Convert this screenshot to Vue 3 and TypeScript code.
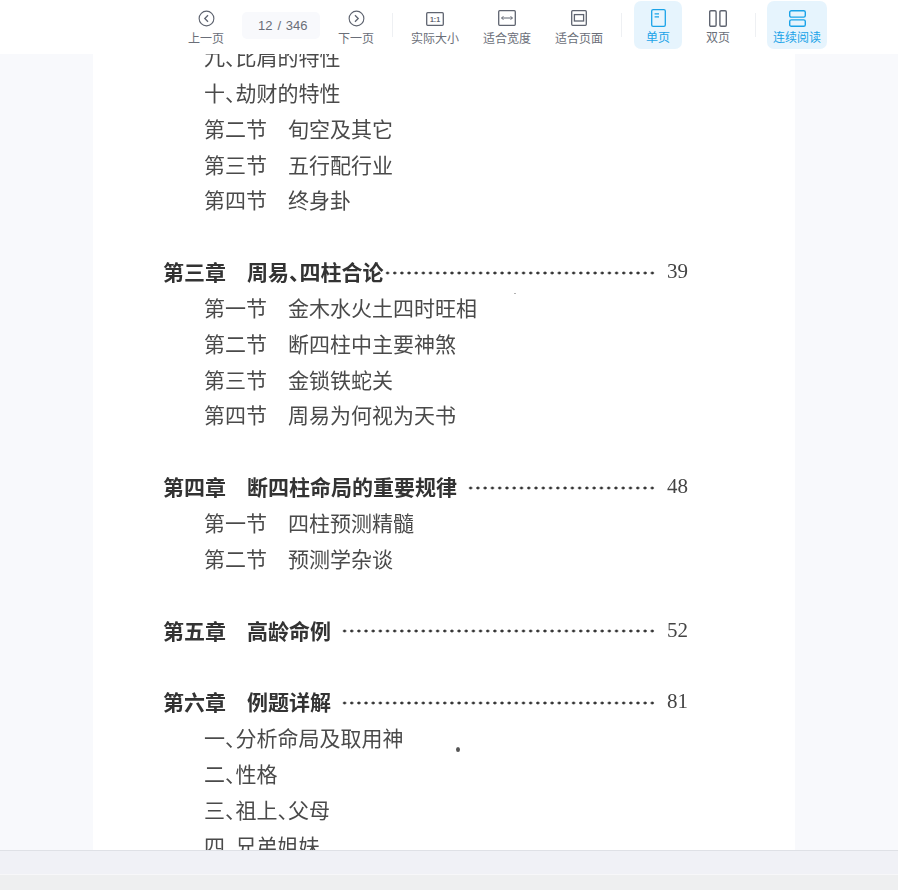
<script setup lang="ts">
interface Line { kind: 'blank' | 'chapter' | 'section' | 'item'; label?: string; title?: string; num?: string; tight?: boolean }
const lines: Line[] = [
  { kind: 'item', title: '九、比肩的特性' },
  { kind: 'item', title: '十、劫财的特性' },
  { kind: 'section', label: '第二节', title: '旬空及其它' },
  { kind: 'section', label: '第三节', title: '五行配行业' },
  { kind: 'section', label: '第四节', title: '终身卦' },
  { kind: 'blank' },
  { kind: 'chapter', label: '第三章', title: '周易、四柱合论', num: '39', tight: true },
  { kind: 'section', label: '第一节', title: '金木水火土四时旺相' },
  { kind: 'section', label: '第二节', title: '断四柱中主要神煞' },
  { kind: 'section', label: '第三节', title: '金锁铁蛇关' },
  { kind: 'section', label: '第四节', title: '周易为何视为天书' },
  { kind: 'blank' },
  { kind: 'chapter', label: '第四章', title: '断四柱命局的重要规律', num: '48' },
  { kind: 'section', label: '第一节', title: '四柱预测精髓' },
  { kind: 'section', label: '第二节', title: '预测学杂谈' },
  { kind: 'blank' },
  { kind: 'chapter', label: '第五章', title: '高龄命例', num: '52' },
  { kind: 'blank' },
  { kind: 'chapter', label: '第六章', title: '例题详解', num: '81' },
  { kind: 'item', title: '一、分析命局及取用神' },
  { kind: 'item', title: '二、性格' },
  { kind: 'item', title: '三、祖上、父母' },
  { kind: 'item', title: '四、兄弟姐妹' },
]
</script>

<template>
  <div class="viewer">
    <header class="toolbar">
      <button class="tool nav">
        <svg width="17" height="17" viewBox="0 0 18 18" fill="none" stroke="#5f6470" stroke-width="1.2"><circle cx="9" cy="9" r="7.8"/><path d="M10.6 5.6 7.2 9l3.4 3.4" stroke-width="1.4"/></svg>
        <span>上一页</span>
      </button>
      <div class="pager"><span>12</span><span class="of">/ 346</span></div>
      <button class="tool nav">
        <svg width="17" height="17" viewBox="0 0 18 18" fill="none" stroke="#5f6470" stroke-width="1.2"><circle cx="9" cy="9" r="7.8"/><path d="M7.4 5.6 10.8 9l-3.4 3.4" stroke-width="1.4"/></svg>
        <span>下一页</span>
      </button>
      <i class="sep"></i>
      <button class="tool fit">
        <svg width="18" height="14" viewBox="0 0 18 14" fill="none"><rect x=".7" y=".7" width="16.6" height="12.6" rx="1" stroke="#5f6470" stroke-width="1.3"/><text x="9" y="9.6" text-anchor="middle" font-size="7" font-weight="700" font-family="Liberation Sans" fill="#5f6470">1:1</text></svg>
        <span>实际大小</span>
      </button>
      <button class="tool fit">
        <svg width="18" height="16" viewBox="0 0 18 16" fill="none" stroke="#5f6470"><rect x=".7" y=".7" width="16.6" height="14.6" rx="1" stroke-width="1.3"/><path d="M3.6 8h10.8M5.4 6.2 3.6 8l1.8 1.8M12.6 6.2 14.4 8l-1.8 1.8" stroke-width="1"/></svg>
        <span>适合宽度</span>
      </button>
      <button class="tool fit">
        <svg width="16" height="16" viewBox="0 0 16 16" fill="none" stroke="#5f6470" stroke-width="1.3"><rect x=".7" y=".7" width="14.6" height="14.6" rx="1"/><rect x="3.4" y="4.6" width="9.2" height="6.4" /></svg>
        <span>适合页面</span>
      </button>
      <i class="sep second"></i>
      <button class="tool mode active">
        <svg width="15" height="18" viewBox="0 0 15 18" fill="none" stroke="#1aa3e8" stroke-width="1.3"><rect x=".7" y=".7" width="13.6" height="16.6" rx="1.4"/><path d="M3.6 4.8h4.4M3.6 7.8h4.4"/></svg>
        <span>单页</span>
      </button>
      <button class="tool mode">
        <svg width="18" height="17" viewBox="0 0 18 17" fill="none" stroke="#5f6470" stroke-width="1.4"><rect x=".7" y=".7" width="6.4" height="15.6" rx="1.2"/><rect x="10.9" y=".7" width="6.4" height="15.6" rx="1.2"/></svg>
        <span>双页</span>
      </button>
      <i class="sep third"></i>
      <button class="tool cont active">
        <svg width="17" height="17" viewBox="0 0 17 17" fill="none" stroke="#1aa3e8" stroke-width="1.4"><rect x=".7" y=".7" width="15.6" height="6.4" rx="1.6"/><rect x=".7" y="9.9" width="15.6" height="6.4" rx="1.6"/></svg>
        <span>连续阅读</span>
      </button>
    </header>

    <main class="stage">
      <article class="page">
        <div v-for="(l, i) in lines" :key="i" class="line" :class="l.kind">
          <template v-if="l.kind === 'chapter'">
            <span class="label">{{ l.label }}</span>
            <span class="title">{{ l.title }}</span>
            <span class="dots" :class="{ tight: l.tight }"></span>
            <span class="num">{{ l.num }}</span>
          </template>
          <template v-else-if="l.kind === 'section'">
            <span class="label">{{ l.label }}</span>
            <span class="title">{{ l.title }}</span>
          </template>
          <span v-else-if="l.kind === 'item'" class="title">{{ l.title }}</span>
        </div>
        <i class="speck big"></i>
        <i class="speck small"></i>
      </article>
    </main>

    <div class="statusbar"></div>
    <div class="footer"></div>
  </div>
</template>

<style>
html, body { margin: 0; padding: 0; }
</style>

<style scoped>
.viewer {
  width: 898px;
  height: 890px;
  display: flex;
  flex-direction: column;
  overflow: hidden;
  background: #f8f9fc;
  font-family: "Liberation Sans", "Noto Sans CJK SC", sans-serif;
}
.toolbar {
  height: 54px;
  flex: none;
  background: #fff;
  display: flex;
  align-items: flex-start;
  box-sizing: border-box;
  padding: 1px 0 0 181px;
  position: relative;
  z-index: 1;
}
.tool {
  border: 0;
  background: transparent;
  margin: 0;
  padding: 0 0 2px;
  height: 48px;
  display: flex;
  flex-direction: column;
  align-items: center;
  justify-content: flex-end;
  gap: 5px;
  font: inherit;
  font-size: 12px;
  line-height: 15px;
  color: #6a6e78;
  border-radius: 7px;
  box-sizing: border-box;
  white-space: nowrap;
}
.nav { width: 50px; }
.fit { width: 72px; gap: 6px; }
.mode { width: 48px; margin-right: 12px; padding-bottom: 3px; gap: 4px; }
.cont { width: 60px; padding-bottom: 3px; gap: 4px; }
.active { background: #e6f4fd; color: #1aa3e8; }
.pager {
  width: 78px;
  height: 27px;
  margin: 11px 0 0 11px;
  background: #f8f9fc;
  border-radius: 5px;
  font-size: 13px;
  color: #6a6e78;
  display: flex;
  align-items: center;
  padding-left: 16px;
  box-sizing: border-box;
  gap: 5px;
}
.of { word-spacing: 1px; }
.pager + .tool { margin-left: 11px; }
.sep {
  width: 1px;
  height: 24px;
  background: #eef0f3;
  margin: 12px 6px 0 11px;
}
.sep.second { margin: 12px 12px 0 6px; }
.sep.third { margin: 12px 11px 0 1px; }
.stage {
  flex: 1;
  min-height: 0;
  overflow: hidden;
  display: flex;
}
.page {
  position: relative;
  width: 702px;
  height: 900px;
  flex: none;
  margin-left: 93px;
  background: #fff;
  box-sizing: border-box;
  padding-left: 70px;
  padding-right: 107px;
  margin-top: -15px;
  color: #4a4a4a;
  font-family: "Noto Sans CJK SC", sans-serif;
  font-size: 21px;
  font-feature-settings: "halt";
}
.line {
  height: 35.85px;
  line-height: 35.85px;
  display: flex;
  align-items: center;
  white-space: nowrap;
  filter: blur(0.35px);
}
.section, .item { padding-left: 41px; }
.section .label, .chapter .label { width: 84px; flex: none; }
.chapter { color: #333; font-weight: 700; }
.chapter .title { flex: none; }
.dots {
  flex: 1;
  height: 4px;
  margin: 2px 11px 0 10px;
  background: radial-gradient(circle at 50% 50%, #333 1.3px, transparent 1.7px) 0 0 / 7.2px 4px;
  background-repeat: round no-repeat;
}
.dots.tight { margin-left: 0; }
.num {
  width: 21px;
  font-family: "Liberation Serif", serif;
  font-weight: 400;
  font-size: 21px;
  color: #444;
}
.speck {
  position: absolute;
  background: #555;
  border-radius: 50%;
}
.speck.big { left: 363px; top: 708px; width: 4px; height: 5px; }
.speck.small { left: 421px; top: 254px; width: 2px; height: 1px; background: #999; }
.statusbar {
  height: 25px;
  flex: none;
  box-sizing: border-box;
  background: #f0f1f6;
  border-top: 1px solid #dfe1e6;
  border-bottom: 1px solid #f7f7f9;
}
.footer {
  height: 15px;
  flex: none;
  background: #eeeff0;
}
</style>
